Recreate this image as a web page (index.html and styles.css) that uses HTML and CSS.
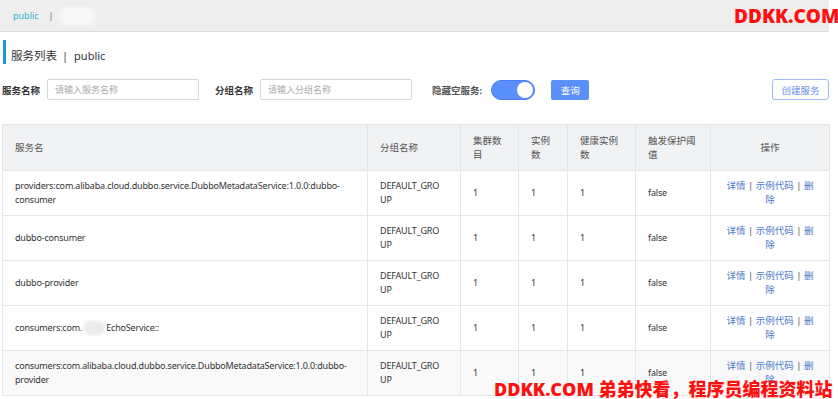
FILE: index.html
```html
<!DOCTYPE html>
<html lang="zh-CN">
<head>
<meta charset="utf-8">
<link rel="stylesheet" href="styles.css">
</head>
<body>
<div class="page">
  <div class="topbar">
    <span class="ns">public</span>
    <span class="sep">|</span>
    <span class="blur"></span>
    <span class="wm-top">DDKK.COM</span>
  </div>
  <div class="title"><span class="title-text">服务列表</span><span class="title-sep">|</span><span class="title-text pub">public</span></div>
  <div class="filters">
    <label class="flabel">服务名称</label>
    <div class="input">请输入服务名称</div>
    <label class="flabel lbl2">分组名称</label>
    <div class="input">请输入分组名称</div>
    <label class="flabel lbl3">隐藏空服务:</label>
    <div class="switch"><span class="knob"></span></div>
    <button class="btn-primary">查询</button>
    <div class="spacer"></div>
    <button class="btn-outline">创建服务</button>
  </div>
  <table class="grid">
    <colgroup>
      <col class="c1"><col class="c2"><col class="c3"><col class="c4"><col class="c5"><col class="c6"><col class="c7">
    </colgroup>
    <thead>
      <tr><th>服务名</th><th>分组名称</th><th>集群数<br>目</th><th>实例<br>数</th><th>健康实例<br>数</th><th>触发保护阈<br>值</th><th class="op">操作</th></tr>
    </thead>
    <tbody>
      <tr><td>providers:com.alibaba.cloud.dubbo.service.DubboMetadataService:1.0.0:dubbo-<br>consumer</td><td>DEFAULT_GRO<br>UP</td><td>1</td><td>1</td><td>1</td><td>false</td><td class="op"><a>详情</a> | <a>示例代码</a> | <a>删<br>除</a></td></tr>
      <tr><td>dubbo-consumer</td><td>DEFAULT_GRO<br>UP</td><td>1</td><td>1</td><td>1</td><td>false</td><td class="op"><a>详情</a> | <a>示例代码</a> | <a>删<br>除</a></td></tr>
      <tr><td>dubbo-provider</td><td>DEFAULT_GRO<br>UP</td><td>1</td><td>1</td><td>1</td><td>false</td><td class="op"><a>详情</a> | <a>示例代码</a> | <a>删<br>除</a></td></tr>
      <tr><td>consumers:com.<span class="blur2"></span>EchoService::</td><td>DEFAULT_GRO<br>UP</td><td>1</td><td>1</td><td>1</td><td>false</td><td class="op"><a>详情</a> | <a>示例代码</a> | <a>删<br>除</a></td></tr>
      <tr class="alt"><td>consumers:com.alibaba.cloud.dubbo.service.DubboMetadataService:1.0.0:dubbo-<br>provider</td><td>DEFAULT_GRO<br>UP</td><td>1</td><td>1</td><td>1</td><td>false</td><td class="op"><a>详情</a> | <a>示例代码</a> | <a>删<br>除</a></td></tr>
    </tbody>
  </table>
  <div class="wm-bottom">DDKK.COM 弟弟快看，程序员编程资料站</div>
</div>
</body>
</html>
```
FILE: styles.css
```css
html, body { margin: 0; padding: 0; background: #fff; overflow: hidden; }
body { font-family: "Noto Sans", "Noto Sans CJK SC", sans-serif; color: #333; width: 838px; height: 399px; }
.page { width: 829px; position: relative; height: 399px; }
.topbar { height: 31px; background: #eeeeee; border-bottom: 1px solid #dcdcdc; display: flex; align-items: center; padding-left: 13px; font-size: 9px; position: relative; }
.ns { color: #2fb0d3; }
.sep { color: #666; margin-left: 10px; }
.blur { width: 36px; height: 18px; background: #f8f8f8; border-radius: 8px; margin-left: 5px; filter: blur(2px); }
.wm-top { position: absolute; left: 734px; top: 3px; color: #ff1010; font-family: "Open Sans", sans-serif; font-weight: 800; font-size: 19px; white-space: nowrap; }
.title { margin: 8px 0 0 3px; border-left: 3px solid #1a9ad6; display: flex; align-items: center; padding-left: 5px; padding-top: 6px; box-sizing: border-box; height: 24px; }
.title-text { font-size: 11.5px; color: #333; }
.title-text.pub { font-size: 11px; }
.title-sep { font-size: 11px; color: #444; margin: 0 6px 0 5px; }
.filters { display: flex; align-items: center; margin-top: 15px; height: 21px; padding-left: 2px; }
.flabel { font-size: 9.5px; font-weight: 700; color: #333; margin-right: 7px; }
.lbl2 { margin-left: 16px; }
.lbl3 { margin-left: 20px; color: #555; margin-right: 9px; }
.input { width: 143px; height: 19px; border: 1px solid #d6d6d6; border-radius: 2px; font-size: 9px; color: #aaa; display: flex; align-items: center; padding-left: 7px; }
.switch { width: 44px; height: 20px; border-radius: 10px; background: #5b8ff9; position: relative; box-sizing: border-box; border: 1px solid #4a7ff0; }
.knob { position: absolute; right: 1px; top: 1px; width: 16px; height: 16px; border-radius: 50%; background: #fff; }
.btn-primary { margin-left: 16px; width: 38px; height: 20px; border: none; border-radius: 2px; background: #5b8ff9; color: #fff; font-family: inherit; font-size: 9.5px; padding: 0; }
.spacer { flex: 1; }
.btn-outline { width: 57px; height: 21px; border: 1px solid #9db8f5; border-radius: 3px; background: #fff; color: #6a8fe8; font-family: inherit; font-size: 9.5px; padding: 0; }
.grid { margin: 24px 0 0 2px; width: 827px; border-collapse: collapse; table-layout: fixed; font-size: 9px; color: #333; }
.c1 { width: 365px; } .c2 { width: 93px; } .c3 { width: 58px; } .c4 { width: 49px; } .c5 { width: 68px; } .c6 { width: 75px; } .c7 { width: 119px; }
.grid th { background: #f1f2f4; font-weight: 400; color: #555; text-align: left; height: 45px; padding: 0 12px; font-size: 9.5px; line-height: 14px; border: 1px solid #e5e6e8; }
.grid td { height: 44px; padding: 0 12px; line-height: 14px; border: 1px solid #e5e6e8; vertical-align: middle; letter-spacing: -0.18px; }
.grid th.op, .grid td.op { text-align: center; }
.grid td.op { color: #555; font-size: 9.5px; letter-spacing: 0; }
.grid a { color: #4b79c9; }
.grid tr.alt td { background: #f9f9fa; }
.blur2 { display: inline-block; width: 22px; height: 14px; background: #ececec; border-radius: 7px; vertical-align: middle; filter: blur(1.5px); margin: 0 1px; }
.wm-bottom { position: absolute; left: 494px; top: 375px; color: #ff1010; font-weight: 800; font-size: 18px; font-family: "Open Sans", "Noto Sans CJK SC", sans-serif; white-space: nowrap; }
```
